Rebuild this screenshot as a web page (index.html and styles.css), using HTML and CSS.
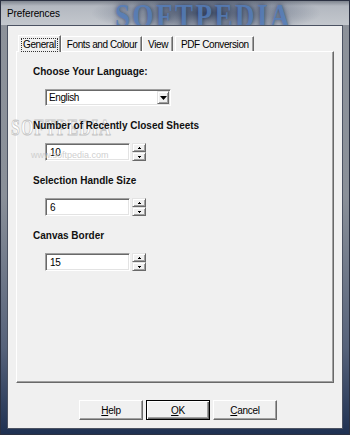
FILE: index.html
```html
<!DOCTYPE html>
<html>
<head>
    <title>Preferences</title>
    <link rel="stylesheet" href="styles.css">
</head>
<body>
    <div class="window">
        <div class="titlebar">
            <span class="title">Preferences</span>
            <span class="brand">SOFTPEDIA</span>
        </div>

        <div class="client">
            <div class="tabs">
                <div class="tab active"><span class="focus">General</span></div>
                <div class="tab">Fonts and Colour</div>
                <div class="tab">View</div>
                <div class="tab apart">PDF Conversion</div>
            </div>

            <div class="panel">
                <div class="field">
                    <div class="label">Choose Your Language:</div>
                    <div class="select">
                        <span class="value">English</span>
                        <span class="drop">
                            <svg width="7" height="4" viewBox="0 0 7 4"><path d="M0 0h7L3.5 4z" fill="#000"/></svg>
                        </span>
                    </div>
                </div>

                <div class="field">
                    <div class="label">Number of Recently Closed Sheets</div>
                    <div class="spin">
                        <div class="input">10</div>
                        <div class="arrows">
                            <span class="arrow"><svg width="3" height="2" viewBox="0 0 3 2"><path d="M1 0h1v1h1v1H0V1h1z" fill="#000"/></svg></span>
                            <span class="arrow"><svg width="3" height="2" viewBox="0 0 3 2"><path d="M0 0h3v1H2v1H1V1H0z" fill="#000"/></svg></span>
                        </div>
                    </div>
                </div>

                <div class="field">
                    <div class="label">Selection Handle Size</div>
                    <div class="spin">
                        <div class="input">6</div>
                        <div class="arrows">
                            <span class="arrow"><svg width="3" height="2" viewBox="0 0 3 2"><path d="M1 0h1v1h1v1H0V1h1z" fill="#000"/></svg></span>
                            <span class="arrow"><svg width="3" height="2" viewBox="0 0 3 2"><path d="M0 0h3v1H2v1H1V1H0z" fill="#000"/></svg></span>
                        </div>
                    </div>
                </div>

                <div class="field">
                    <div class="label">Canvas Border</div>
                    <div class="spin">
                        <div class="input">15</div>
                        <div class="arrows">
                            <span class="arrow"><svg width="3" height="2" viewBox="0 0 3 2"><path d="M1 0h1v1h1v1H0V1h1z" fill="#000"/></svg></span>
                            <span class="arrow"><svg width="3" height="2" viewBox="0 0 3 2"><path d="M0 0h3v1H2v1H1V1H0z" fill="#000"/></svg></span>
                        </div>
                    </div>
                </div>
            </div>

            <div class="buttons">
                <button class="btn"><u>H</u>elp</button>
                <button class="btn default"><u>O</u>K</button>
                <button class="btn"><u>C</u>ancel</button>
            </div>
        </div>

        <!-- faint site watermark over the dialog -->
        <span class="wm-logo">SOFTPEDIA</span>
        <span class="wm-url">www.softpedia.com</span>
    </div>
</body>
</html>
```

FILE: styles.css
```css
body {
    margin: 0;
    font-family: 'Liberation Sans', Arial, sans-serif;
    font-size: 10px;
    letter-spacing: -0.4px;
    color: #000;
}

.window {
    position: relative;
    width: 350px;
    height: 435px;
    box-sizing: border-box;
    display: flex;
    flex-direction: column;
    padding: 0 6px 5px 6px;
    border: 1px solid #2b3142;
    background: linear-gradient(to bottom, #8d929a 0%, #8a9099 45%, #56627a 80%, #1f3152 100%);
    overflow: hidden;
}

.titlebar {
    position: relative;
    height: 24px;
    margin: 0 -6px;
    padding: 0 6px;
    display: flex;
    align-items: center;
    background:
        radial-gradient(ellipse 115px 22px at 205px 12px, rgba(40, 55, 85, 0.8), rgba(40, 55, 85, 0) 100%),
        linear-gradient(to bottom, #7f858f 0, #b3b8c0 5px, #c3c7cd 100%);
    overflow: hidden;
}

.title {
    font-size: 10px;
    letter-spacing: -0.1px;
    color: #000;
    position: relative;
    z-index: 1;
}

.brand {
    position: absolute;
    left: 114px;
    top: -4px;
    font-family: 'Liberation Serif', serif;
    font-weight: bold;
    font-size: 27px;
    letter-spacing: 2.5px;
    color: #5079b6;
    transform: scaleY(1.25);
    transform-origin: top left;
    text-shadow: 0 0 4px rgba(20, 35, 70, 0.8);
    opacity: 0.85;
}

.client {
    flex: 1;
    display: flex;
    flex-direction: column;
    background: #f0f0f0;
    border: 1px solid #4b5262;
    padding: 8px 8px 0 8px;
}

.tabs {
    display: flex;
    align-items: flex-end;
    height: 17px;
    padding-left: 2px;
    position: relative;
    z-index: 3;
}

.tab {
    height: 15px;
    box-sizing: border-box;
    padding: 1px 4px 0 5px;
    border-top: 1px solid #fff;
    border-left: 1px solid #fff;
    border-right: 1px solid #696969;
    box-shadow: inset -1px 0 #a0a0a0;
    line-height: 13px;
    white-space: nowrap;
}

.tab.active {
    height: 17px;
    margin-bottom: -1px;
    padding: 2px 3px 0 3px;
    background: #f0f0f0;
}

.tab.apart {
    margin-left: 2px;
}

.focus {
    display: inline-block;
    outline: 1px dotted #333;
    padding: 0 1px;
    line-height: 12px;
}

.panel {
    height: 332px;
    box-sizing: border-box;
    border: 1px solid;
    border-color: #fff #696969 #696969 #fff;
    box-shadow: inset -1px -1px #a0a0a0;
    padding: 14px 16px 0 16px;
}

.field {
    display: flex;
    flex-direction: column;
    gap: 11px;
    margin-bottom: 14px;
}

.label {
    position: relative;
    z-index: 2;
    font-weight: bold;
    font-size: 10px;
    letter-spacing: 0;
    line-height: 12px;
    color: #111;
}

.select {
    margin-left: 12px;
    width: 126px;
    height: 17px;
    box-sizing: border-box;
    display: flex;
    align-items: center;
    justify-content: space-between;
    background: #fff;
    border: 1px solid;
    border-color: #a0a0a0 #fff #fff #a0a0a0;
    box-shadow: inset 1px 1px #696969, inset -1px -1px #e3e3e3;
    padding: 0 1px 0 3px;
}

.drop {
    width: 12px;
    height: 13px;
    box-sizing: border-box;
    display: flex;
    align-items: center;
    justify-content: center;
    background: #f0f0f0;
    border: 1px solid;
    border-color: #e3e3e3 #696969 #696969 #e3e3e3;
    box-shadow: inset 1px 1px #fff, inset -1px -1px #a0a0a0;
}

.spin {
    margin-left: 12px;
    display: flex;
    gap: 2px;
}

.input {
    width: 85px;
    height: 18px;
    box-sizing: border-box;
    background: #fff;
    border: 1px solid;
    border-color: #a0a0a0 #fff #fff #a0a0a0;
    box-shadow: inset 1px 1px #696969, inset -1px -1px #e3e3e3;
    padding: 2px 0 0 4px;
    line-height: 13px;
}

.arrows {
    display: flex;
    flex-direction: column;
    width: 14px;
}

.arrow {
    height: 9px;
    box-sizing: border-box;
    display: flex;
    align-items: center;
    justify-content: center;
    background: #f0f0f0;
    border: 1px solid;
    border-color: #e3e3e3 #696969 #696969 #e3e3e3;
    box-shadow: inset 1px 1px #fff, inset -1px -1px #a0a0a0;
}

.buttons {
    display: flex;
    justify-content: center;
    gap: 3px;
    margin-top: 17px;
    padding-left: 6px;
}

.btn {
    width: 64px;
    height: 20px;
    box-sizing: border-box;
    font-family: 'Liberation Sans', Arial, sans-serif;
    font-size: 10px;
    letter-spacing: -0.3px;
    color: #000;
    background: #f0f0f0;
    border: 1px solid;
    border-color: #fff #696969 #696969 #fff;
    box-shadow: inset -1px -1px #a0a0a0;
    padding: 0;
}

.btn.default {
    border: 1px solid #000;
    box-shadow: inset 1px 1px #fff, inset -1px -1px #696969, inset -2px -2px #a0a0a0;
}

.wm-logo {
    position: absolute;
    z-index: 1;
    left: 10px;
    top: 114px;
    font-family: 'Liberation Serif', serif;
    font-weight: bold;
    font-size: 16px;
    letter-spacing: 1px;
    color: #fff;
    -webkit-text-stroke: 0.6px #c4c4c4;
    transform: scaleY(1.45);
    transform-origin: top left;
    pointer-events: none;
}

.wm-url {
    position: absolute;
    z-index: 1;
    left: 30px;
    top: 149px;
    font-family: 'Liberation Sans Narrow', 'Liberation Sans', sans-serif;
    font-size: 9px;
    letter-spacing: 0;
    color: #cfcfcf;
    pointer-events: none;
}
```
